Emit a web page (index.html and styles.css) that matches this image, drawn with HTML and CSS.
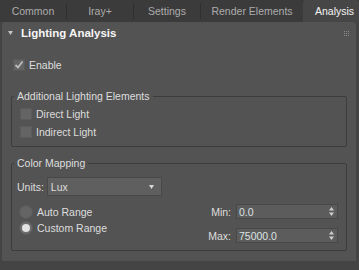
FILE: index.html
```html
<!DOCTYPE html>
<html lang="en">
<head>
  <meta charset="UTF-8">
  <meta name="viewport" content="width=device-width, initial-scale=1.0">
  <title>Lighting Analysis</title>
  <link rel="stylesheet" href="styles.css">
</head>
<body>
  <div class="tabs">
    <div class="tab">Common</div>
    <span class="sep"></span>
    <div class="tab">Iray+</div>
    <span class="sep"></span>
    <div class="tab">Settings</div>
    <span class="sep"></span>
    <div class="tab wide">Render Elements</div>
    <div class="tab active">Analysis</div>
  </div>

  <div class="panel">
    <div class="rollout-head">
      <svg class="twisty" width="5" height="4" viewBox="0 0 5 4"><path d="M0 0H5L2.5 4Z" fill="#c4c4c4"/></svg>
      <span class="title">Lighting Analysis</span>
      <svg class="grip" width="5" height="5" viewBox="0 0 5 5" fill="#8a8a8a">
        <rect x="0" y="0" width="1" height="1"/><rect x="2" y="0" width="1" height="1"/><rect x="4" y="0" width="1" height="1"/>
        <rect x="0" y="2" width="1" height="1"/><rect x="2" y="2" width="1" height="1"/><rect x="4" y="2" width="1" height="1"/>
        <rect x="0" y="4" width="1" height="1"/><rect x="2" y="4" width="1" height="1"/><rect x="4" y="4" width="1" height="1"/>
      </svg>
    </div>

    <div class="rollout-body">
      <label class="check enable">
        <span class="box">
          <svg width="10" height="10" viewBox="0 0 10 10"><path d="M1.5 5L4 7.5L8.5 1.5" fill="none" stroke="#bdbdbd" stroke-width="1.8"/></svg>
        </span>
        Enable
      </label>

      <fieldset class="group">
        <legend>Additional Lighting Elements</legend>
        <div class="group-body lights">
          <label class="check"><span class="box"></span>Direct Light</label>
          <label class="check"><span class="box"></span>Indirect Light</label>
        </div>
      </fieldset>

      <fieldset class="group mapping">
        <legend>Color Mapping</legend>
        <div class="group-body">
          <div class="units">
            <span>Units:</span>
            <div class="select">
              <span>Lux</span>
              <svg width="5" height="4" viewBox="0 0 5 4"><path d="M0 0H5L2.5 4Z" fill="#d8d8d8"/></svg>
            </div>
          </div>

          <div class="range">
            <div class="radios">
              <label class="radio"><span class="dot"></span>Auto Range</label>
              <label class="radio"><span class="dot on"></span>Custom Range</label>
            </div>
            <div class="limits">
              <div class="limit">
                <span>Min:</span>
                <div class="spinner">
                  <span>0.0</span>
                  <svg width="5" height="9" viewBox="0 0 5 9" fill="#d0d0d0"><path d="M2.5 0L5 3.5H0Z"/><path d="M0 5.5H5L2.5 9Z"/></svg>
                </div>
              </div>
              <div class="limit">
                <span>Max:</span>
                <div class="spinner">
                  <span>75000.0</span>
                  <svg width="5" height="9" viewBox="0 0 5 9" fill="#d0d0d0"><path d="M2.5 0L5 3.5H0Z"/><path d="M0 5.5H5L2.5 9Z"/></svg>
                </div>
              </div>
            </div>
          </div>
        </div>
      </fieldset>
    </div>
  </div>
</body>
</html>
```

FILE: styles.css
```css
body {
  margin: 0;
  width: 359px;
  height: 270px;
  overflow: hidden;
  background: #444444;
  font-family: "Liberation Sans", Arial, sans-serif;
  font-size: 10.5px;
  color: #dedede;
}

/* tab strip */
.tabs {
  display: flex;
  height: 22px;
  background: #3b3b3b;
}
.tab {
  width: 66px;
  padding-top: 1px;
  line-height: 21px;
  text-align: center;
  color: #acacac;
  white-space: nowrap;
}
.tab.wide {
  width: 102px;
}
.tab.active {
  flex: 1;
  padding-left: 12px;
  text-align: left;
  color: #f4f4f4;
  background: #464646;
  border-radius: 3px 3px 0 0;
}
.sep {
  width: 1px;
  height: 16px;
  align-self: center;
  background: #2f2f2f;
}

/* rollout */
.panel {
  width: 354px;
  margin-left: 2px;
  padding-bottom: 10px;
  background: #535353;
  border-radius: 3px 3px 0 0;
}
.rollout-head {
  display: flex;
  align-items: center;
  height: 22px;
  padding: 0 7px 0 6px;
}
.title {
  flex: 1;
  margin-left: 8px;
  font-size: 11.5px;
  font-weight: bold;
  color: #f6f6f6;
}
.rollout-body {
  padding: 15px 9px 0;
}

/* checkboxes */
.check {
  display: flex;
  align-items: center;
  gap: 4px;
  height: 12px;
}
.enable {
  margin-left: 2px;
}
.box {
  display: flex;
  align-items: center;
  justify-content: center;
  width: 12px;
  height: 12px;
  box-sizing: border-box;
  background: #646464;
  border: 1px solid #5a5a5a;
}

/* group boxes */
.group {
  margin: 19px 0 0;
  padding: 0;
  min-width: 0;
  border: 1px solid #3c3c3c;
  border-radius: 2px;
}
.group.mapping {
  margin-top: 10px;
}
.group legend {
  margin-left: 2px;
  padding: 0 3px;
  line-height: 12px;
}
.group-body {
  padding: 8px 8px 7px 5px;
}
.lights {
  padding: 6px 8px 8px;
}
.lights .check + .check {
  margin-top: 6px;
}

/* units dropdown */
.units {
  display: flex;
  align-items: center;
  gap: 3px;
}
.select {
  display: flex;
  align-items: center;
  justify-content: space-between;
  width: 115px;
  height: 19px;
  box-sizing: border-box;
  padding: 0 7px 0 3px;
  background: #5f5f5f;
  border: 1px solid #484848;
}

/* range */
.range {
  display: flex;
  justify-content: space-between;
  margin-top: 8px;
}
.radios {
  display: flex;
  flex-direction: column;
  gap: 2px;
  padding-top: 1px;
  margin-left: 2px;
}
.radio {
  display: flex;
  align-items: center;
  gap: 4px;
  height: 14px;
}
.dot {
  display: flex;
  align-items: center;
  justify-content: center;
  width: 14px;
  height: 14px;
  box-sizing: border-box;
  border-radius: 50%;
  background: #646464;
  border: 1px solid #5a5a5a;
}
.dot.on {
  background: #6c6c6c;
}
.dot.on::after {
  content: "";
  width: 8px;
  height: 8px;
  border-radius: 50%;
  background: #e2e2e2;
}
.limits {
  display: flex;
  flex-direction: column;
  gap: 9px;
}
.limit {
  display: flex;
  align-items: center;
  justify-content: flex-end;
  gap: 5px;
}
.spinner {
  display: flex;
  align-items: center;
  justify-content: space-between;
  width: 102px;
  height: 15px;
  box-sizing: border-box;
  padding: 0 3px 0 2px;
  background: #5c5c5c;
  border: 1px solid #484848;
  color: #dde2e2;
}
```
